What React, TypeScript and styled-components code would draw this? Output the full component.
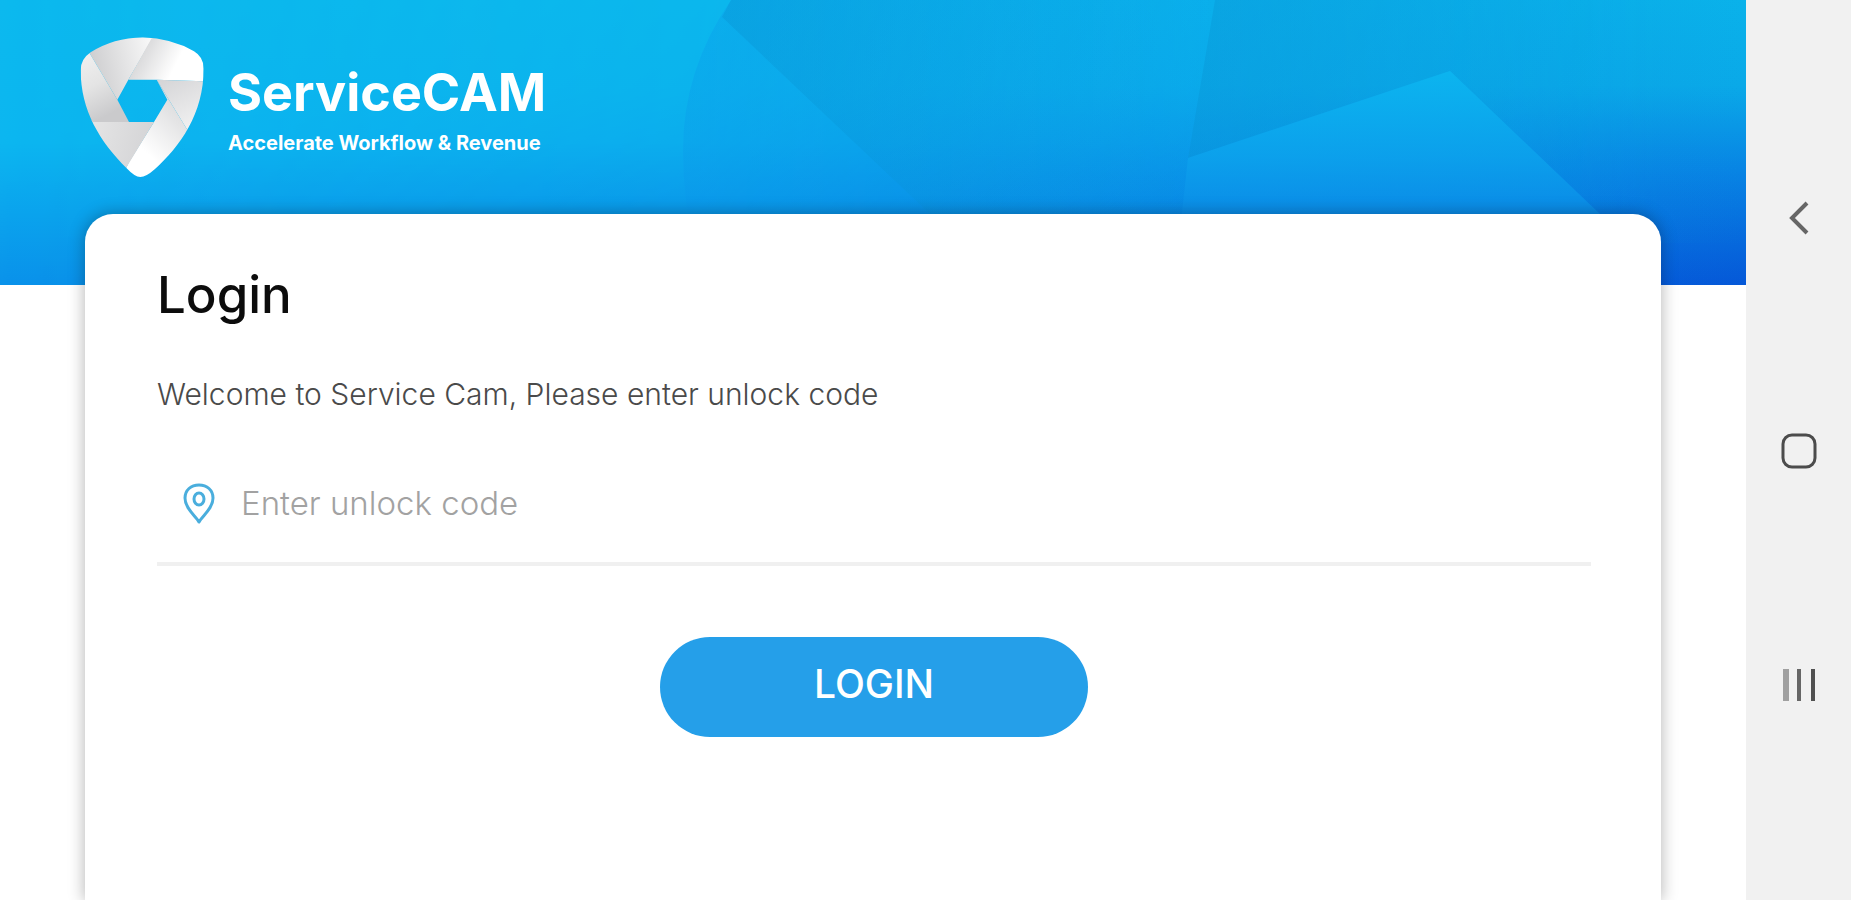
import React from "react";
import styled, { createGlobalStyle } from "styled-components";

const GlobalStyle = createGlobalStyle`
  *, *::before, *::after { box-sizing: border-box; }
  body {
    margin: 0;
    background: #ffffff;
    font-family: Inter, "Open Sans", sans-serif;
  }
`;

const Screen = styled.div`
  display: flex;
  min-height: 100vh;
`;

const Main = styled.main`
  flex: 1;
  min-width: 0;
  display: flex;
  flex-direction: column;
  overflow: hidden;
`;

const Header = styled.header`
  position: relative;
  height: 285px;
  flex-shrink: 0;
  padding: 37px 80px 0;
  background: #0cb8ee;
`;

const HeaderArt = styled.svg`
  position: absolute;
  inset: 0;
  width: 100%;
  height: 100%;
`;

const Brand = styled.div`
  position: relative;
  display: flex;
  align-items: flex-start;
  gap: 24px;
  color: #ffffff;
`;

const BrandText = styled.div`
  padding-top: 24px;
`;

const BrandName = styled.div`
  font-size: 52px;
  line-height: 64px;
  font-weight: 700;
`;

const Tagline = styled.div`
  margin-top: 6px;
  font-size: 20px;
  line-height: 24px;
  font-weight: 700;
`;

const Card = styled.form`
  position: relative;
  flex: 1;
  display: flex;
  flex-direction: column;
  margin: -71px 85px 0;
  padding: 50px 70px 0 72px;
  border-radius: 28px 28px 0 0;
  background: #ffffff;
  box-shadow: 0 0 16px 1px rgba(0, 0, 0, 0.28);
`;

const Title = styled.h1`
  margin: 0;
  font-size: 51px;
  line-height: 62px;
  font-weight: 500;
  color: #0c0c0c;
`;

const Welcome = styled.label`
  margin-top: 48px;
  font-size: 30px;
  line-height: 40px;
  font-weight: 300;
  color: #4a4a4a;
`;

const Field = styled.div`
  display: flex;
  align-items: center;
  gap: 24px;
  height: 122px;
  margin-top: 30px;
  padding-left: 24px;
  border-bottom: 4px solid #f0f0f0;
`;

const CodeInput = styled.input`
  flex: 1;
  min-width: 0;
  height: 60px;
  padding: 0;
  border: 0;
  outline: 0;
  background: transparent;
  font-family: inherit;
  font-size: 33px;
  font-weight: 300;
  color: #3c3c3c;

  &::placeholder {
    color: #a2a2a2;
    opacity: 1;
  }
`;

const LoginButton = styled.button`
  align-self: center;
  width: 428px;
  height: 100px;
  margin-top: 71px;
  padding: 0 0 8px;
  border: 0;
  border-radius: 50px;
  background: #259fe9;
  color: #ffffff;
  font-family: inherit;
  font-size: 39px;
  font-weight: 500;
  cursor: pointer;
`;

const SystemNav = styled.nav`
  flex: 0 0 105px;
  display: flex;
  flex-direction: column;
  align-items: center;
  justify-content: space-evenly;
  padding-top: 2px;
  background: #f1f1f1;
`;

const NavButton = styled.button`
  display: flex;
  width: 36px;
  height: 36px;
  padding: 0;
  border: 0;
  background: transparent;
  cursor: pointer;
`;

function HeaderBackground() {
  return (
    <HeaderArt viewBox="0 0 1746 285" preserveAspectRatio="none" aria-hidden="true">
      <defs>
        <linearGradient id="sky" x1="0" y1="0" x2="0" y2="1">
          <stop offset="0" stopColor="#0cb9ee" />
          <stop offset="0.5" stopColor="#0cb6f0" />
          <stop offset="1" stopColor="#0a92ea" />
        </linearGradient>
        <linearGradient id="deep" x1="0" y1="0" x2="0" y2="1">
          <stop offset="0" stopColor="#0ab2ea" />
          <stop offset="0.3" stopColor="#0aa9e8" />
          <stop offset="0.6" stopColor="#0884e4" />
          <stop offset="1" stopColor="#0558d8" />
        </linearGradient>
        <linearGradient id="fade" x1="0" y1="0" x2="1" y2="0">
          <stop offset="0" stopColor="#000" />
          <stop offset="0.4" stopColor="#3c3c3c" />
          <stop offset="0.95" stopColor="#fff" />
        </linearGradient>
        <mask id="fadeMask">
          <rect width="1746" height="285" fill="url(#fade)" />
        </mask>
        <linearGradient id="lens" x1="0" y1="0" x2="1" y2="0">
          <stop offset="0" stopColor="#0a96ea" stopOpacity="0.3" />
          <stop offset="0.8" stopColor="#0a96ea" stopOpacity="0.1" />
          <stop offset="1" stopColor="#0a96ea" stopOpacity="0" />
        </linearGradient>
        <linearGradient id="shade" x1="0" y1="0" x2="1" y2="0">
          <stop offset="0" stopColor="#0890d0" stopOpacity="0.34" />
          <stop offset="1" stopColor="#0890d0" stopOpacity="0" />
        </linearGradient>
        <linearGradient id="facet" x1="0" y1="0" x2="0" y2="1">
          <stop offset="0" stopColor="#0cb6f0" />
          <stop offset="0.4" stopColor="#0ca2ec" />
          <stop offset="0.66" stopColor="#0b8ee8" />
          <stop offset="0.85" stopColor="#0a78e0" stopOpacity="0" />
        </linearGradient>
      </defs>
      <rect width="1746" height="285" fill="url(#sky)" />
      <rect width="1746" height="285" fill="url(#deep)" mask="url(#fadeMask)" />
      <path d="M731 0 Q683 70 683 150 Q683 220 705 285 H1746 V0Z" fill="url(#lens)" />
      <path d="M731 0 L722 17 L930 214 L1010 285 H1174 L1188 158 L1215 0Z" fill="url(#shade)" />
      <path d="M1215 0 L1188 158 L1450 71 L1600 214 L1640 243 H1746 V0Z" fill="url(#shade)" />
      <path d="M1188 158 L1450 71 L1600 214 L1680 285 H1174Z" fill="url(#facet)" opacity="0.85" />
    </HeaderArt>
  );
}

function ShieldLogo() {
  return (
    <svg width="124" height="140" viewBox="60 50 372 420" role="img" aria-label="ServiceCAM shield">
      <defs>
        <clipPath id="shield">
          <path d="M62 150 Q62 116 92 96 Q160 53 248 51 Q335 54 402 93 Q431 110 431 145 C431 280 360 378 285 446 Q258 470 241 470 Q224 470 200 444 C120 365 62 270 62 150Z" />
        </clipPath>
        <linearGradient id="fa" x1="0" y1="0.2" x2="1" y2="0">
          <stop offset="0" stopColor="#c9c9cb" />
          <stop offset="1" stopColor="#fafafa" />
        </linearGradient>
        <linearGradient id="fb" x1="0" y1="0" x2="1" y2="0.3">
          <stop offset="0" stopColor="#c6c6c8" />
          <stop offset="0.75" stopColor="#ffffff" />
        </linearGradient>
        <linearGradient id="fc" x1="0" y1="0" x2="0.3" y2="1">
          <stop offset="0" stopColor="#d4d4d6" />
          <stop offset="1" stopColor="#f8f8f8" />
        </linearGradient>
        <linearGradient id="fd" x1="1" y1="0" x2="0.2" y2="1">
          <stop offset="0" stopColor="#c6c6c8" />
          <stop offset="0.8" stopColor="#ffffff" />
        </linearGradient>
        <linearGradient id="fe" x1="0" y1="0" x2="1" y2="0.2">
          <stop offset="0" stopColor="#e8e8e8" />
          <stop offset="1" stopColor="#d4d4d6" />
        </linearGradient>
        <linearGradient id="ff" x1="0" y1="0" x2="0.3" y2="1">
          <stop offset="0" stopColor="#f6f6f6" />
          <stop offset="0.6" stopColor="#e4e4e4" />
          <stop offset="1" stopColor="#cacacc" />
        </linearGradient>
      </defs>
      <g clipPath="url(#shield)">
        <path d="M60 70 L90 50 H280 L205 178 L172 238 L90 100Z" fill="url(#fa)" />
        <path d="M277 50 H432 V183 L290 178 H205Z" fill="url(#fb)" />
        <path d="M290 178 L432 183 V400 L378 322Z" fill="url(#fc)" />
        <path d="M290 178 L378 322 L432 400 L300 470 H185 L207 425 L282 305 L322 238Z" fill="url(#fd)" />
        <path d="M90 300 L207 305 H282 L200 440 L180 470 L60 400Z" fill="url(#fe)" />
        <path d="M60 50 L172 238 L207 305 H60Z" fill="url(#ff)" />
      </g>
    </svg>
  );
}

function PinIcon() {
  return (
    <svg width="36" height="42" viewBox="0 0 36 42" fill="none" stroke="#4aaedd" strokeWidth="3" aria-hidden="true">
      <path d="M18 40 C15 34 4 27 4 16 C4 8 10 3 18 3 C26 3 32 8 32 16 C32 27 21 34 18 40Z" strokeLinejoin="round" />
      <ellipse cx="18" cy="17" rx="5" ry="6" />
    </svg>
  );
}

export default function App() {
  return (
    <>
      <GlobalStyle />
      <Screen>
        <Main>
          <Header>
            <HeaderBackground />
            <Brand>
              <ShieldLogo />
              <BrandText>
                <BrandName>ServiceCAM</BrandName>
                <Tagline>Accelerate Workflow &amp; Revenue</Tagline>
              </BrandText>
            </Brand>
          </Header>
          <Card onSubmit={(event) => event.preventDefault()}>
            <Title>Login</Title>
            <Welcome htmlFor="unlock-code">Welcome to Service Cam, Please enter unlock code</Welcome>
            <Field>
              <PinIcon />
              <CodeInput id="unlock-code" type="text" placeholder="Enter unlock code" />
            </Field>
            <LoginButton type="submit">LOGIN</LoginButton>
          </Card>
        </Main>
        <SystemNav aria-label="System">
          <NavButton type="button" aria-label="Back">
            <svg width="36" height="36" viewBox="0 0 36 36" fill="none" stroke="#666" strokeWidth="4">
              <path d="M26 3 L11 18 L26 33" />
            </svg>
          </NavButton>
          <NavButton type="button" aria-label="Home">
            <svg width="36" height="36" viewBox="0 0 36 36" fill="none" stroke="#4c4c4c" strokeWidth="3">
              <rect x="2" y="2" width="32" height="32" rx="9" />
            </svg>
          </NavButton>
          <NavButton type="button" aria-label="Recent apps">
            <svg width="36" height="36" viewBox="0 0 36 36" fill="none" strokeWidth="4">
              <path d="M5 2 V34" stroke="#a0a0a0" strokeWidth="6" />
              <path d="M18 2 V34" stroke="#666" />
              <path d="M32 2 V34" stroke="#505050" />
            </svg>
          </NavButton>
        </SystemNav>
      </Screen>
    </>
  );
}
